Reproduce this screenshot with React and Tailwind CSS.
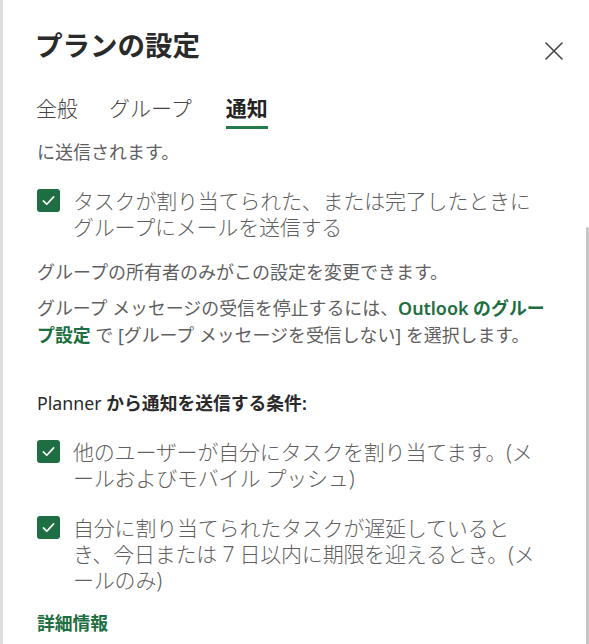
import React from "react";

const FONT = { fontFamily: '"Noto Sans", "Noto Sans CJK JP", sans-serif' };

function Check() {
  return (
    <div className="w-[23px] h-[23px] shrink-0 rounded-[3px] bg-[#1f6e43] flex items-center justify-center mt-[1px]">
      <svg width="15" height="15" viewBox="0 0 16 16" fill="none">
        <path d="M2.5 8.5 L6.2 12 L13.5 4.2" stroke="white" strokeWidth="1.8" strokeLinecap="round" strokeLinejoin="round" />
      </svg>
    </div>
  );
}

function CheckRow({ lines, className }) {
  return (
    <div className={"flex gap-[13px] " + className}>
      <Check />
      <div className="text-[21px] leading-[26px] font-light text-[#5f5f5f] whitespace-nowrap tracking-[-0.2px]">
        {lines.map((l, i) => (
          <div key={i}>{l}</div>
        ))}
      </div>
    </div>
  );
}

export default function App() {
  return (
    <div style={FONT} className="w-[589px] h-[644px] bg-white flex overflow-hidden">
      <div className="w-[3px] bg-[#dedede] shrink-0" />
      <div className="flex-1 flex flex-col min-w-0">
        <div className="flex justify-between items-start pl-[32px] pr-[26px] pt-[28px]">
          <h1 className="text-[27.5px] leading-[36px] font-bold text-[#2a2a2a]">プランの設定</h1>
          <svg className="mt-[14px]" width="18" height="18" viewBox="0 0 18 18" fill="none">
            <path d="M1 1 L17 17 M17 1 L1 17" stroke="#444" strokeWidth="1.6" strokeLinecap="round" />
          </svg>
        </div>
        <div className="flex pl-[33px] mt-[32px] text-[21px] leading-[24px] gap-[31px]">
          <div className="flex flex-col text-[#444] font-light">
            <span>全般</span>
          </div>
          <div className="flex flex-col text-[#444] font-light">
            <span>グループ</span>
          </div>
          <div className="flex flex-col items-stretch ml-[3px]">
            <span className="font-bold text-[#242424]">通知</span>
            <div className="h-[3px] bg-[#237a4b] mt-[6px]" />
          </div>
        </div>
        <div className="flex flex-1 min-h-0">
          <div className="flex-1 pl-[34px] pt-[10px] text-[#5f5f5f]">
            <p className="text-[18px] leading-[26px]">に送信されます。</p>
            <CheckRow
              className="mt-[23px]"
              lines={["タスクが割り当てられた、または完了したときに", "グループにメールを送信する"]}
            />
            <p className="mt-[19px] text-[18px] leading-[26px] whitespace-nowrap">
              グループの所有者のみがこの設定を変更できます。
            </p>
            <p className="mt-[10px] text-[17.9px] leading-[27px] whitespace-nowrap">
              グループ メッセージの受信を停止するには、
              <span className="text-[#1d6e40] font-semibold">Outlook のグルー</span>
              <br />
              <span className="text-[#1d6e40] font-semibold">プ設定</span> で [グループ メッセージを受信しない] を選択します。
            </p>
            <p className="mt-[41px] text-[17.8px] leading-[26px] font-semibold text-[#2a2a2a]">
              <span className="font-normal">Planner</span> から通知を送信する条件:
            </p>
            <CheckRow
              className="mt-[23px]"
              lines={["他のユーザーが自分にタスクを割り当てます。(メ", "ールおよびモバイル プッシュ)"]}
            />
            <CheckRow
              className="mt-[24px]"
              lines={["自分に割り当てられたタスクが遅延していると", "き、今日または 7 日以内に期限を迎えるとき。(メ", "ールのみ)"]}
            />
            <p className="mt-[17px] text-[17.8px] leading-[26px] font-bold text-[#1d6e40]">詳細情報</p>
          </div>
          <div className="w-[3px] shrink-0 flex flex-col">
            <div className="mt-[98px] flex-1 bg-[#c6c6c6] rounded-t-[2px]" />
          </div>
        </div>
      </div>
    </div>
  );
}
